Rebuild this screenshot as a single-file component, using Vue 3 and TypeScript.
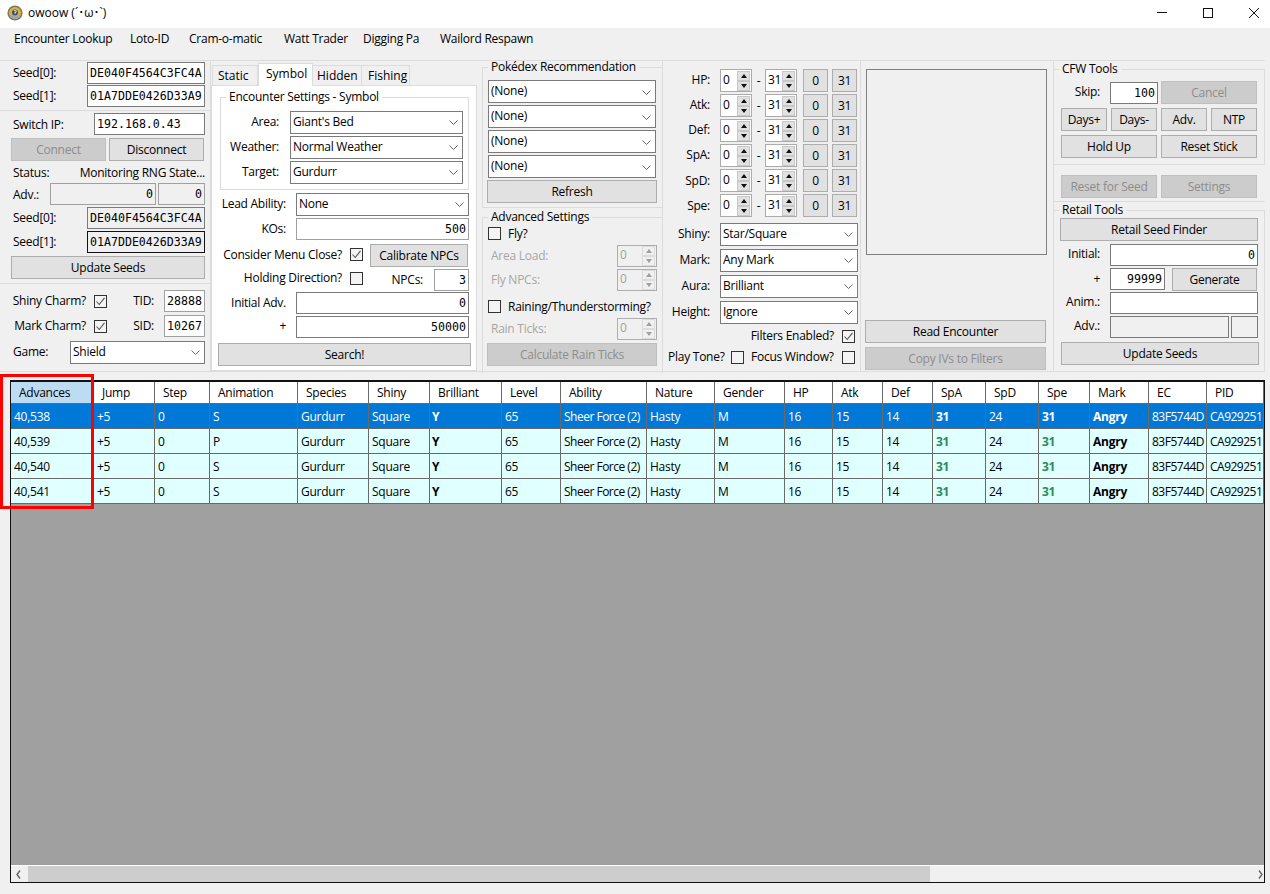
<script setup lang="ts">
const menu: string[] = ['Encounter Lookup', 'Loto-ID', 'Cram-o-matic', 'Watt Trader', 'Digging Pa', 'Wailord Respawn']
const tabs: string[] = ['Static', 'Symbol', 'Hidden', 'Fishing']
const ivs: string[] = ['HP:', 'Atk:', 'Def:', 'SpA:', 'SpD:', 'Spe:']
const filters: [string, string][] = [['Shiny:', 'Star/Square'], ['Mark:', 'Any Mark'], ['Aura:', 'Brilliant'], ['Height:', 'Ignore']]
const columns: string[] = ['Advances', 'Jump', 'Step', 'Animation', 'Species', 'Shiny', 'Brilliant', 'Level', 'Ability', 'Nature', 'Gender', 'HP', 'Atk', 'Def', 'SpA', 'SpD', 'Spe', 'Mark', 'EC', 'PID']
const rows: { adv: string; anim: string }[] = [
  { adv: '40,538', anim: 'S' },
  { adv: '40,539', anim: 'P' },
  { adv: '40,540', anim: 'S' },
  { adv: '40,541', anim: 'S' },
]
</script>

<template>
  <div class="app">
    <header class="titlebar">
      <svg class="appicon" width="16" height="16" viewBox="0 0 16 16">
        <circle cx="8" cy="8" r="7.6" fill="#77776c" />
        <circle cx="8" cy="8" r="6" fill="#e0b52a" />
        <path d="M2.2 9.6 A6 6 0 0 0 13.8 9.6 Q8 12.4 2.2 9.6 Z" fill="#a3a5ab" />
        <circle cx="8" cy="7.4" r="3" fill="#2f4f96" />
        <path d="M6.8 6.2 Q8 4.8 9.2 6.2 Q9.2 7.2 8 7.8 V9" stroke="#e8d98a" stroke-width="1.1" fill="none" />
      </svg>
      <span class="title">owoow (´･ω･`)</span>
      <div class="winbtns">
        <span class="winbtn"><svg width="10" height="10" viewBox="0 0 10 10"><path d="M0 4.5H10" stroke="#111" fill="none" /></svg></span>
        <span class="winbtn"><svg width="10" height="10" viewBox="0 0 10 10"><rect x=".5" y=".5" width="9" height="9" stroke="#111" fill="none" /></svg></span>
        <span class="winbtn"><svg width="10" height="10" viewBox="0 0 10 10"><path d="M0 0L10 10M10 0L0 10" stroke="#111" fill="none" /></svg></span>
      </div>
    </header>

    <nav class="menubar">
      <span v-for="m in menu" :key="m">{{ m }}</span>
    </nav>

    <section class="panel">
      <!-- Left column -->
      <div class="col col-left">
        <div class="sec sec-a">
          <div class="row"><span class="lbl grow">Seed[0]:</span><div class="in mono w118">DE040F4564C3FC4A</div></div>
          <div class="row mt1"><span class="lbl grow">Seed[1]:</span><div class="in mono w118">01A7DDE0426D33A9</div></div>
        </div>
        <div class="sec sec-b">
          <div class="row"><span class="lbl grow down1">Switch IP:</span><div class="in mono ip">192.168.0.43</div></div>
          <div class="row mt3 gap3"><button class="btn off w95">Connect</button><button class="btn w95">Disconnect</button></div>
          <div class="row status down1"><span class="lbl grow">Status:</span><span>Monitoring RNG State...</span></div>
          <div class="row"><span class="lbl grow down1">Adv.:</span><div class="in mono end ro soft w106">0</div><div class="in mono end ro soft w47 ml2">0</div></div>
          <div class="row mt2"><span class="lbl grow">Seed[0]:</span><div class="in mono ro w118">DE040F4564C3FC4A</div></div>
          <div class="row mt2"><span class="lbl grow">Seed[1]:</span><div class="in mono ro focus w118">01A7DDE0426D33A9</div></div>
          <div class="row mt3"><button class="btn w194">Update Seeds</button></div>
        </div>
        <div class="sec sec-c">
          <div class="row"><span class="lbl charm">Shiny Charm?</span><span class="cb ml8"><svg width="11" height="11" viewBox="0 0 11 11"><path d="M1.5 5.5L4.2 8.5L9.5 1.8" stroke="#555" stroke-width="1.1" fill="none" /></svg></span><span class="lbl grow right tidl">TID:</span><div class="in mono soft w41 center">28888</div></div>
          <div class="row mt3"><span class="lbl charm">Mark Charm?</span><span class="cb ml8"><svg width="11" height="11" viewBox="0 0 11 11"><path d="M1.5 5.5L4.2 8.5L9.5 1.8" stroke="#555" stroke-width="1.1" fill="none" /></svg></span><span class="lbl grow right tidl">SID:</span><div class="in mono soft w41 center">10267</div></div>
          <div class="row mt4"><span class="lbl grow up1">Game:</span><div class="sel w135"><span>Shield</span><svg class="chev" width="9" height="5" viewBox="0 0 9 5"><path d="M.5.5L4.5 4.5L8.5.5" stroke="#666" fill="none" /></svg></div></div>
        </div>
      </div>

      <!-- Tabs column -->
      <div class="col col-tabs">
        <div class="tabstrip">
          <span v-for="t in tabs" :key="t" class="tab" :class="{ active: t === 'Symbol' }">{{ t }}</span>
        </div>
        <div class="tabpage">
          <fieldset class="enc">
            <legend>Encounter Settings - Symbol</legend>
            <div class="row"><span class="lbl right enc-l up1">Area:</span><div class="sel w173"><span>Giant's Bed</span><svg class="chev" width="9" height="5" viewBox="0 0 9 5"><path d="M.5.5L4.5 4.5L8.5.5" stroke="#666" fill="none" /></svg></div></div>
            <div class="row mt2"><span class="lbl right enc-l up1">Weather:</span><div class="sel w173"><span>Normal Weather</span><svg class="chev" width="9" height="5" viewBox="0 0 9 5"><path d="M.5.5L4.5 4.5L8.5.5" stroke="#666" fill="none" /></svg></div></div>
            <div class="row mt2"><span class="lbl right enc-l up1">Target:</span><div class="sel w173"><span>Gurdurr</span><svg class="chev" width="9" height="5" viewBox="0 0 9 5"><path d="M.5.5L4.5 4.5L8.5.5" stroke="#666" fill="none" /></svg></div></div>
          </fieldset>
          <div class="row mt3"><span class="lbl right page-l up1">Lead Ability:</span><div class="sel w173"><span>None</span><svg class="chev" width="9" height="5" viewBox="0 0 9 5"><path d="M.5.5L4.5 4.5L8.5.5" stroke="#666" fill="none" /></svg></div></div>
          <div class="row mt2"><span class="lbl right page-l">KOs:</span><div class="in mono end w173 soft">500</div></div>
          <div class="row mt4"><span class="lbl right check-l up1">Consider Menu Close?</span><span class="cb ml8 up1"><svg width="11" height="11" viewBox="0 0 11 11"><path d="M1.5 5.5L4.2 8.5L9.5 1.8" stroke="#555" stroke-width="1.1" fill="none" /></svg></span><button class="btn calib">Calibrate NPCs</button></div>
          <div class="row mt2"><span class="lbl right check-l up2">Holding Direction?</span><span class="cb ml8 up2"></span><span class="lbl right npc-l">NPCs:</span><div class="in mono end soft w35">3</div></div>
          <div class="row mt1"><span class="lbl right page-l">Initial Adv.</span><div class="in mono end w173">0</div></div>
          <div class="row mt2"><span class="lbl right page-l up1">+</span><div class="in mono end w173">50000</div></div>
          <div class="row mt5"><button class="btn search">Search!</button></div>
        </div>
      </div>

      <!-- Pokedex column -->
      <div class="col col-dex">
        <fieldset class="dex1">
          <legend>Pokédex Recommendation</legend>
          <div v-for="n in 4" :key="n" class="sel dexsel"><span>(None)</span><svg class="chev" width="9" height="5" viewBox="0 0 9 5"><path d="M.5.5L4.5 4.5L8.5.5" stroke="#666" fill="none" /></svg></div>
          <button class="btn w170 mt2">Refresh</button>
        </fieldset>
        <fieldset class="dex2">
          <legend>Advanced Settings</legend>
          <div class="row fly"><span class="cb"></span><span class="ml7">Fly?</span></div>
          <div class="row dis-row mt4"><span class="lbl grow dim">Area Load:</span><div class="spin dis w40"><span>0</span><span class="arrows"><i class="up"></i><i class="dn"></i></span></div></div>
          <div class="row dis-row mt2"><span class="lbl grow dim">Fly NPCs:</span><div class="spin dis w40"><span>0</span><span class="arrows"><i class="up"></i><i class="dn"></i></span></div></div>
          <div class="row rain"><span class="cb"></span><span class="ml7">Raining/Thunderstorming?</span></div>
          <div class="row dis-row mt5"><span class="lbl grow dim">Rain Ticks:</span><div class="spin dis w40"><span>0</span><span class="arrows"><i class="up"></i><i class="dn"></i></span></div></div>
          <button class="btn off w170 mt3">Calculate Rain Ticks</button>
        </fieldset>
      </div>

      <!-- IV column -->
      <div class="col col-iv">
        <div v-for="s in ivs" :key="s" class="row ivrow">
          <span class="lbl right iv-l">{{ s }}</span>
          <div class="spin w32 ml10"><span>0</span><span class="arrows"><i class="up"></i><i class="dn"></i></span></div>
          <span class="dash">-</span>
          <div class="spin w32"><span>31</span><span class="arrows"><i class="up"></i><i class="dn"></i></span></div>
          <button class="btn mini ml6">0</button>
          <button class="btn mini ml4">31</button>
        </div>
        <div v-for="(f, i) in filters" :key="f[0]" class="row" :class="i ? 'mt3' : 'mt6'">
          <span class="lbl right iv-l up1">{{ f[0] }}</span>
          <div class="sel w138 ml10"><span>{{ f[1] }}</span><svg class="chev" width="9" height="5" viewBox="0 0 9 5"><path d="M.5.5L4.5 4.5L8.5.5" stroke="#666" fill="none" /></svg></div>
        </div>
        <div class="row checks filt"><span class="lbl">Filters Enabled?</span><span class="cb ml8"><svg width="11" height="11" viewBox="0 0 11 11"><path d="M1.5 5.5L4.2 8.5L9.5 1.8" stroke="#555" stroke-width="1.1" fill="none" /></svg></span></div>
        <div class="row checks tone"><span class="lbl tone-l">Play Tone?</span><span class="cb ml8"></span><span class="lbl focus-l">Focus Window?</span><span class="cb ml8"></span></div>
      </div>

      <!-- Picture column -->
      <div class="col col-pic">
        <div class="picture"></div>
        <button class="btn w181 read">Read Encounter</button>
        <button class="btn off w181 mt4">Copy IVs to Filters</button>
      </div>

      <!-- Tools column -->
      <div class="col col-tools">
        <fieldset class="cfw">
          <legend>CFW Tools</legend>
          <div class="row"><span class="lbl right skip-l up1">Skip:</span><div class="in mono end skip-in">100</div><button class="btn off w96 ml3">Cancel</button></div>
          <div class="row mt4 gap4"><button class="btn w46">Days+</button><button class="btn w46">Days-</button><button class="btn w46">Adv.</button><button class="btn w46">NTP</button></div>
          <div class="row mt4 gap4"><button class="btn w96">Hold Up</button><button class="btn w96">Reset Stick</button></div>
        </fieldset>
        <div class="row reset gap4"><button class="btn off w96">Reset for Seed</button><button class="btn off w96">Settings</button></div>
        <fieldset class="retail">
          <legend>Retail Tools</legend>
          <button class="btn finder">Retail Seed Finder</button>
          <div class="row mt3"><span class="lbl right skip-l up1">Initial:</span><div class="in mono end w148">0</div></div>
          <div class="row mt2 gen-row"><span class="lbl right skip-l">+</span><div class="in mono end w55">99999</div><button class="btn gen">Generate</button></div>
          <div class="row mt2"><span class="lbl right skip-l up1">Anim.:</span><div class="in w148"></div></div>
          <div class="row mt2"><span class="lbl right skip-l up1">Adv.:</span><div class="in ro w119"></div><div class="in ro w27 ml2"></div></div>
          <button class="btn upd">Update Seeds</button>
        </fieldset>
      </div>
    </section>

    <section class="grid">
      <div class="tr thead">
        <div v-for="(c, i) in columns" :key="c" class="th" :class="{ sorted: i === 0 }">{{ c }}</div>
      </div>
      <div v-for="(r, idx) in rows" :key="r.adv" class="tr body" :class="{ selected: idx === 0 }">
        <div class="td">{{ r.adv }}</div>
        <div class="td">+5</div>
        <div class="td">0</div>
        <div class="td">{{ r.anim }}</div>
        <div class="td">Gurdurr</div>
        <div class="td">Square</div>
        <div class="td bold y">Y</div>
        <div class="td">65</div>
        <div class="td tight">Sheer Force (2)</div>
        <div class="td">Hasty</div>
        <div class="td">M</div>
        <div class="td">16</div>
        <div class="td">15</div>
        <div class="td">14</div>
        <div class="td bold good">31</div>
        <div class="td">24</div>
        <div class="td bold good">31</div>
        <div class="td bold">Angry</div>
        <div class="td tight">83F5744D</div>
        <div class="td tight">CA929251</div>
      </div>
      <div class="empty"></div>
      <div class="hscroll">
        <span class="harrow"><svg width="5" height="9" viewBox="0 0 5 9"><path d="M4 .5L1 4.5L4 8.5" stroke="#606060" stroke-width="1.3" fill="none" /></svg></span>
        <span class="thumb"></span>
        <span class="track"></span>
        <span class="harrow"><svg width="5" height="9" viewBox="0 0 5 9"><path d="M1 .5L4 4.5L1 8.5" stroke="#606060" stroke-width="1.3" fill="none" /></svg></span>
      </div>
    </section>

    <div class="callout"></div>
  </div>
</template>

<style>
html, body { margin: 0; background: #f0f0f0; }
</style>

<style scoped>
.app {
  position: relative;
  width: 1270px;
  height: 894px;
  overflow: hidden;
  background: #f0f0f0;
  color: #000;
  font: 12px/16px "Open Sans", "Noto Sans", "Noto Sans CJK JP", sans-serif;
  letter-spacing: -0.25px;
}
fieldset { margin: 0; padding: 0; min-width: 0; border: 1px solid #dcdcdc; box-sizing: border-box; }
legend { padding: 0 3px; margin-left: 5px; line-height: 16px; }
button { font: inherit; letter-spacing: inherit; margin: 0; padding: 0; cursor: default; color: #000; }

.titlebar { display: flex; align-items: center; height: 28px; background: #fff; padding-left: 7px; padding-bottom: 3px; box-sizing: border-box; }
.appicon { flex: none; }
.title { margin-left: 5px; letter-spacing: 0; padding-top: 1px; }
.winbtns { display: flex; margin-left: auto; margin-right: -7px; }
.winbtn { display: flex; align-items: center; justify-content: center; width: 46px; height: 25px; }

.menubar { display: grid; grid-template-columns: 97px 40px 76px 60px 58px 91px; justify-content: start; column-gap: 19px; height: 32px; padding: 3px 0 0 14px; box-sizing: border-box; white-space: nowrap; }

.panel { display: flex; width: 1265px; height: 312px; border-top: 1px solid #dcdcdc; border-bottom: 1px solid #dcdcdc; box-sizing: border-box; }
.col { flex: none; box-sizing: border-box; height: 310px; }
.col-left { width: 211px; border-right: 1px solid #dcdcdc; }
.col-tabs { width: 269px; }
.col-dex { width: 183px; padding-left: 2px; border-right: 1px solid #dcdcdc; }
.col-iv { width: 198px; padding-top: 8px; border-right: 1px solid #dcdcdc; }
.col-pic { width: 193px; padding: 8px 0 0 4px; border-right: 1px solid #dcdcdc; }
.col-tools { width: 211px; }

.row { display: flex; align-items: center; }
.grow { flex: 1; }
.right { text-align: right; }
.lbl { white-space: nowrap; }
.up1 { margin-bottom: 2px; }
.up2 { margin-bottom: 4px; }
.down1 { margin-top: 2px; }
.status.down1 { margin-top: 0; padding-top: 1px; height: 21px; box-sizing: content-box; }
.mt1 { margin-top: 1px; } .mt2 { margin-top: 2px; } .mt3 { margin-top: 3px; } .mt4 { margin-top: 4px; } .mt5 { margin-top: 5px; } .mt6 { margin-top: 6px; }
.ml2 { margin-left: 2px; } .ml3 { margin-left: 3px; } .ml4 { margin-left: 4px; } .ml6 { margin-left: 6px; } .ml7 { margin-left: 7px; } .ml8 { margin-left: 8px; } .ml10 { margin-left: 10px; }
.gap3 { gap: 3px; } .gap4 { gap: 4px; }

.in { display: flex; align-items: center; flex: none; height: 22px; box-sizing: border-box; padding: 0 2px; background: #fff; border: 1px solid #7a7a7a; white-space: nowrap; overflow: hidden; }
.mono { font-family: "DejaVu Sans Mono", "Liberation Mono", monospace; font-size: 11.6px; letter-spacing: 0; }
.end { justify-content: flex-end; }
.center { justify-content: center; }
.ro { background: #f0f0f0; }
.soft { border-color: #a0a0a0; }
.focus { border-color: #111; }

.sel { display: flex; align-items: center; justify-content: space-between; flex: none; height: 23px; box-sizing: border-box; padding: 0 4px 2px 2px; background: #fff; border: 1px solid #7a7a7a; white-space: nowrap; }
.chev { flex: none; margin-top: 2px; }

.btn { display: block; flex: none; height: 23px; box-sizing: border-box; background: #e1e1e1; border: 1px solid #adadad; text-align: center; white-space: nowrap; }
.off { background: #cccccc; border-color: #bfbfbf; color: #8d8d8d; }

.cb { display: flex; align-items: center; justify-content: center; flex: none; width: 13px; height: 13px; box-sizing: border-box; border: 1px solid #333; background: #f4f4f4; }

.spin { display: flex; align-items: center; justify-content: space-between; flex: none; height: 23px; box-sizing: border-box; padding: 0 1px 0 2px; background: #fff; border: 1px solid #ababab; }
.spin > span:first-child { margin-top: -2px; }
.arrows { display: flex; flex-direction: column; }
.arrows i { display: flex; align-items: center; justify-content: center; width: 13px; height: 10px; box-sizing: border-box; background: #e1e1e1; border: 1px solid #c8c8c8; }
.arrows i::before { content: ""; border-left: 3.5px solid transparent; border-right: 3.5px solid transparent; }
.arrows .up::before { border-bottom: 4px solid #111; }
.arrows .dn::before { border-top: 4px solid #111; }
.spin.dis { height: 22px; border-color: #adadad; background: #f0f0f0; color: #a0a0a0; }
.spin.dis .arrows i { background: #f0f0f0; border-color: #dcdcdc; }
.spin.dis .arrows .up::before { border-bottom-color: #a0a0a0; }
.spin.dis .arrows .dn::before { border-top-color: #a0a0a0; }
.dim { color: #a6a6a6; }

.w27 { width: 27px; } .w32 { width: 32px; } .w35 { width: 35px; } .w40 { width: 40px; } .w41 { width: 41px; } .w46 { width: 46px; } .w47 { width: 47px; } .w55 { width: 55px; }
.w95 { width: 95px; } .w96 { width: 96px; } .w106 { width: 106px; } .w118 { width: 118px; } .w119 { width: 119px; } .w135 { width: 135px; } .w138 { width: 138px; } .w148 { width: 148px; } .w170 { width: 170px; } .w173 { width: 173px; } .w181 { width: 181px; } .w194 { width: 194px; }

/* Left column */
.sec { box-sizing: border-box; padding: 0 5px 0 11px; border-bottom: 1px solid #dcdcdc; }
.sec .lbl.grow:not(.right) { padding-left: 2px; }
.sec-a { height: 50px; padding-top: 1px; }
.sec-b { height: 173px; padding-top: 2px; }
.sec-c { padding-top: 6px; border-bottom: 0; }
.ip { width: 111px; }
.status { height: 22px; }
.status span:last-child { white-space: nowrap; }
.charm { width: 75px; text-align: right; }
.tidl { padding-right: 10px; }

/* Tabs */
.tabstrip { display: flex; align-items: flex-end; height: 24px; padding-left: 1px; }
.tab { position: relative; box-sizing: border-box; height: 20px; padding-top: 2px; letter-spacing: 0; background: #f0f0f0; border: 1px solid #dcdcdc; border-bottom: 0; border-left: 0; }
.tab:nth-child(1) { width: 46px; padding-left: 5px; border-left: 1px solid #dcdcdc; }
.tab:nth-child(2) { width: 55px; padding-left: 7px; }
.tab:nth-child(3) { width: 49px; padding-left: 4px; }
.tab:nth-child(4) { width: 48px; padding-left: 6px; }
.tab.active { height: 23px; margin-bottom: -1px; padding-top: 2px; background: #fff; border-left: 1px solid #dcdcdc; z-index: 1; }
.tabpage { width: 266px; height: 286px; box-sizing: border-box; background: #fff; border: 1px solid #dcdcdc; padding-top: 3px; }
.enc { width: 249px; height: 101px; margin-left: 8px; padding-top: 6px; }
.enc-l { width: 58px; margin-right: 11px; }
.page-l { width: 74px; margin-right: 10px; }
.check-l { width: 130px; }
.calib { width: 98px; margin-left: 7px; }
.npc-l { width: 60px; margin-right: 11px; }
.search { width: 253px; margin-left: 6px; }

/* Pokedex */
.dex1 { width: 181px; height: 147px; padding: 7px 0 0 4px; }
.dex1 legend { line-height: 12px; margin-left: 1px; padding: 0 3px; }
.dexsel { width: 168px; margin: 0 0 2px 1px; padding-bottom: 1px; }
.dex2 { width: 181px; height: 163px; margin-top: 2px; padding: 2px 5px 0 5px; border-bottom: 0; }
.dex2 legend { line-height: 14px; margin-left: 0; padding: 0 3px; }
.dex2 .w170 { margin-left: -1px; }
.fly { height: 15px; }
.dis-row { padding-left: 3px; }
.rain { height: 13px; margin-top: 9px; }

/* IV */
.ivrow { margin-bottom: 2px; }
.ivrow:nth-child(-n+4) .iv-l { margin-bottom: 2px; }
.iv-l { width: 47px; }
.dash { width: 13px; text-align: center; }
.mini { width: 25px; }
.checks { justify-content: flex-end; padding-right: 5px; }
.filt { margin-top: 4px; }
.tone { margin-top: 5px; padding-left: 5px; justify-content: flex-start; }
.tone-l { width: 55px; }
.focus-l { margin-left: 7px; width: 83px; }

/* Picture */
.picture { width: 181px; height: 186px; margin-left: 1px; box-sizing: border-box; border: 1px solid #808080; }
.read { margin-top: 65px; }

/* Tools */
.cfw { width: 211px; height: 104px; padding: 4px 0 0 7px; border-left: 0; }
.cfw legend { margin-left: -2px; }
.retail legend { margin-left: -1px; }
.cfw .skip-l { width: 39px; margin-right: 10px; }
.retail .skip-l { width: 40px; margin-right: 10px; }
.skip-in { width: 48px; }
.reset { height: 37px; padding: 7px 0 0 7px; box-sizing: border-box; border-bottom: 1px solid #dcdcdc; }
.retail { width: 211px; height: 170px; padding: 0 0 0 6px; border-left: 0; border-bottom: 0; }
.finder { width: 198px; }
.gen-row { height: 22px; }
.gen { width: 85px; margin-left: 7px; align-self: flex-start; }
.upd { width: 198px; margin: 4px 0 0 1px; }

/* Results grid */
.grid { width: 1255px; height: 503px; margin: 8px 0 0 10px; box-sizing: border-box; border: 1px solid #111; border-top-width: 2px; display: flex; flex-direction: column; }
.tr { display: grid; grid-template-columns: 83px 61px 55px 88px 71px 61px 72px 59px 86px 68px 70px 48px 50px 50px 53px 53px 51px 59px 58px 57px; flex: none; white-space: nowrap; }
.thead { height: 22px; background: #fff; }
.th { padding-left: 8px; border-right: 1px solid #696969; border-bottom: 1px solid #696969; line-height: 21px; box-sizing: border-box; }
.th.sorted { background: #bcdcf4; }
.body { height: 25px; background: #e0ffff; }
.td { padding-left: 3px; border-right: 1px solid #696969; border-bottom: 1px solid #696969; line-height: 25px; box-sizing: border-box; overflow: hidden; }
.tight { letter-spacing: -0.5px; }
.bold { font-weight: 700; }
.y { padding-left: 2px; }
.good { color: #2e8b57; }
.selected { background: #0078d7; color: #fff; }
.selected .good { color: #fff; }
.empty { flex: 1; background: #a0a0a0; }
.hscroll { display: flex; align-items: center; height: 17px; box-sizing: border-box; background: #f0f0f0; border-top: 1px solid #fff; flex: none; }
.harrow { display: flex; align-items: center; justify-content: center; width: 17px; box-sizing: border-box; }
.harrow:first-child { padding-right: 3px; }
.harrow:last-child { padding-left: 9px; }
.thumb { width: 902px; height: 16px; background: #cdcdcd; }
.track { flex: 1; }

.callout { position: absolute; left: 0; top: 374px; width: 94px; height: 135px; box-sizing: border-box; border: 3px solid #fe0000; pointer-events: none; }
</style>
